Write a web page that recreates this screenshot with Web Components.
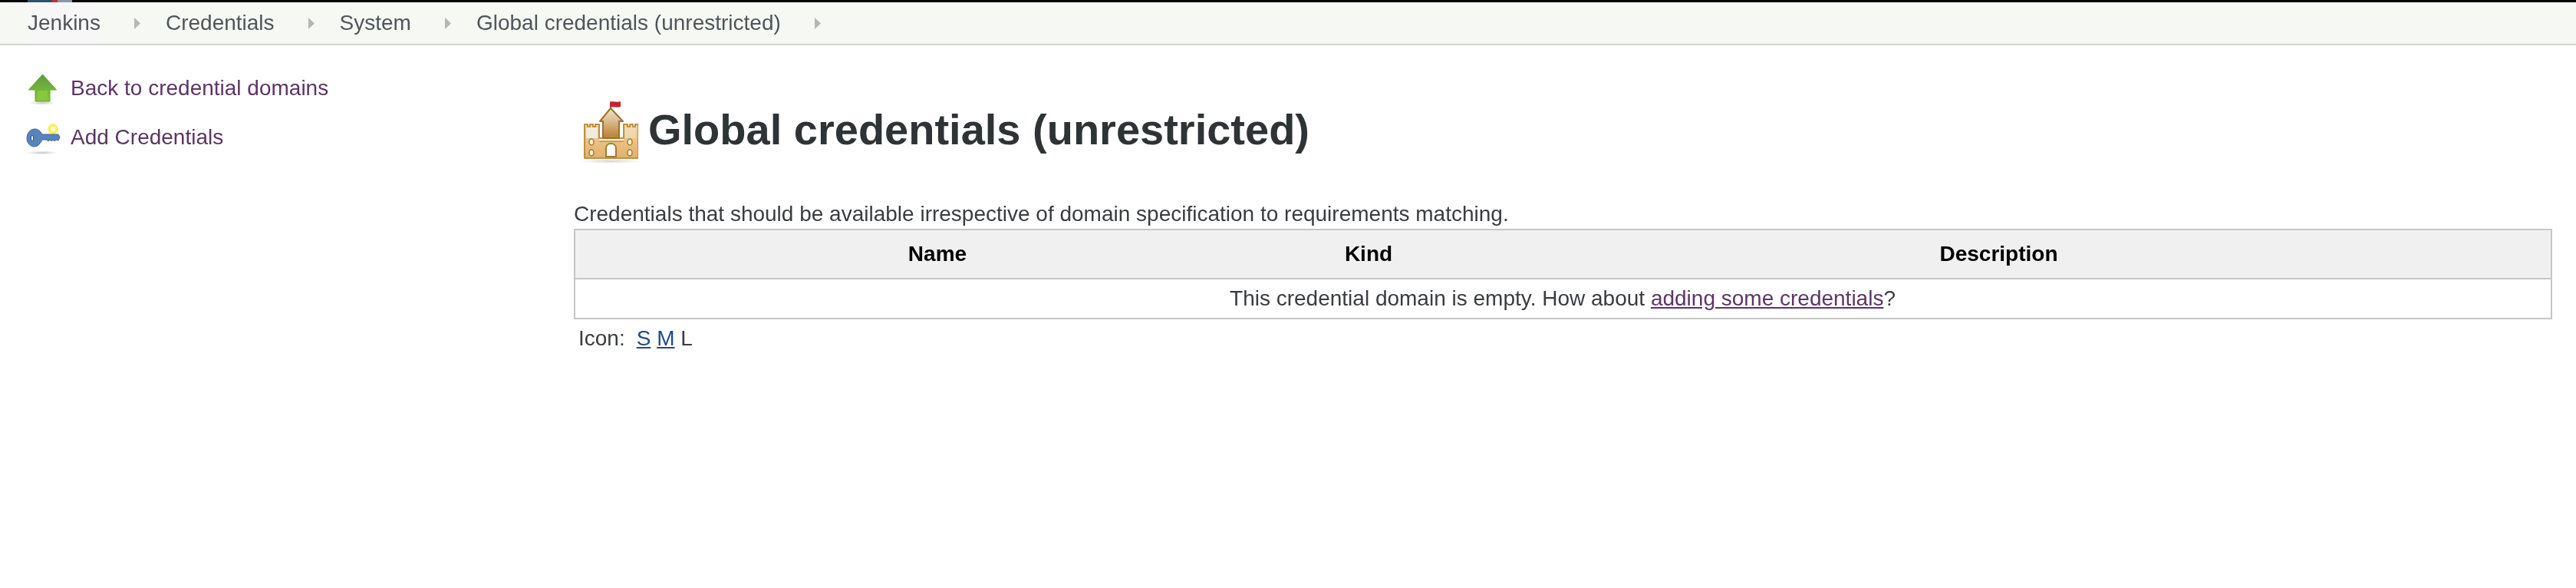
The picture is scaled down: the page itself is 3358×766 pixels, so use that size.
<!DOCTYPE html>
<html><head><meta charset="utf-8"><title>Global credentials</title>
<style>
html,body{margin:0;padding:0;background:#fff;height:766px;overflow:hidden}
body{font-family:"Liberation Sans",Arial,sans-serif;color:#333}
</style></head><body>
<x-top-strip></x-top-strip>
<x-breadcrumbs>
<x-crumb first>Jenkins</x-crumb><x-crumb>Credentials</x-crumb><x-crumb>System</x-crumb><x-crumb>Global credentials (unrestricted)</x-crumb>
</x-breadcrumbs>
<x-layout>
<x-side-panel slot="side">
<x-side-link icon="up">Back to credential domains</x-side-link>
<x-side-link icon="key">Add Credentials</x-side-link>
</x-side-panel>
<x-credentials-view>
<x-page-title>Global credentials (unrestricted)</x-page-title>
<x-cred-table></x-cred-table>
</x-credentials-view>
</x-layout>
<script>
function def(name,html,init){customElements.define(name,class extends HTMLElement{constructor(){super();this.attachShadow({mode:'open'}).innerHTML=typeof html==='function'?html(this):html;}connectedCallback(){init&&init(this)}})}
def('x-top-strip',`<style>:host{display:block;height:3px;background:#050505}
i{display:block;margin-left:36px;width:58px;height:3px;background:linear-gradient(90deg,#33506f 0 55%,#b6383a 55% 68%,#8b95a5 68%)}</style><i></i>`);
def('x-breadcrumbs',`<style>:host{display:flex;align-items:center;height:54px;background:#f6f9f3;border-bottom:2px solid #d3d6d0;filter:blur(.45px)}</style><slot></slot>`);
def('x-crumb',`<style>:host{display:flex;align-items:center;font-size:28px;color:#50555b;height:100%;white-space:nowrap}
.t{padding:0 0 0 36px;height:100%;display:flex;align-items:center}
:host([first]) .t{background:linear-gradient(#f6f7f6,#f6f7f6) 36px 0/92px 100% no-repeat}
svg{margin-left:44px;margin-right:-3px;display:block}</style>
<span class="t"><slot></slot></span><svg width="8" height="15" viewBox="0 0 8 15"><path d="M0 0l8 7.500L0 15z" fill="#b4b7b4"/></svg>`);
def('x-layout',`<style>:host{display:flex;align-items:flex-start;filter:blur(.45px)}</style><slot name="side"></slot><slot></slot>`);
def('x-side-panel',`<style>:host{display:flex;flex-direction:column;gap:24px;width:748px;flex:none;box-sizing:border-box;padding:36px 0 0 33px}</style><slot></slot>`);
const icons={
up:`<svg width="48" height="48" viewBox="0 0 48 48"><defs><linearGradient id="g" x1="0" y1="0" x2="0" y2="1"><stop offset="0" stop-color="#5f9b3c"/><stop offset="1" stop-color="#86c63a"/></linearGradient><radialGradient id="s"><stop offset="0" stop-color="#999" stop-opacity=".55"/><stop offset="1" stop-color="#999" stop-opacity="0"/></radialGradient></defs><ellipse cx="22.500" cy="43" rx="18" ry="3" fill="url(#s)"/><path d="M22.500 6 4.500 26H13v15h19V26h8.500z" fill="url(#g)" stroke="#6b9e3c" stroke-width="1" stroke-linejoin="round"/><path d="M16 27h13v12H16z" fill="#86c93a"/></svg>`,
key:`<svg width="48" height="48" viewBox="0 0 48 48"><defs><radialGradient id="s"><stop offset="0" stop-color="#999" stop-opacity=".55"/><stop offset="1" stop-color="#999" stop-opacity="0"/></radialGradient></defs><ellipse cx="22" cy="44" rx="21" ry="2.500" fill="url(#s)"/><circle cx="36" cy="13" r="5" fill="#fffbd0" stroke="#ffee58" stroke-width="3.500"/><path d="M2 25c0-7 5-12 10-12s8 3 10 7h21l2 4-2 4-3-1-2 2-2-2-2 2-2-2-2 2-2-2H22c-2 4-5 9-10 9S2 32 2 25z" fill="#5684bd" stroke="#3d659c" stroke-width="1"/><ellipse cx="9" cy="25" rx="1.800" ry="3.500" fill="#fff" stroke="#26364d"/></svg>`};
def('x-side-link',t=>`<style>:host{display:flex;align-items:center;height:40px;font-size:28px;color:#5c3566}
.i{width:59px;flex:none;display:block}svg{display:block}</style><span class="i">${icons[t.getAttribute('icon')]}</span><span><slot></slot></span>`);
def('x-credentials-view',`<style>:host{display:block;flex:1;min-width:0;padding:0 31px 0 0}</style><slot></slot>`);
def('x-page-title',`<style>:host{display:flex;align-items:center;margin:65px 0 0 4px;height:100px}
svg{display:block;flex:none;margin-right:13px}
h1{margin:0 0 11px;font-size:56px;font-weight:700;color:#2e3436;white-space:nowrap;line-height:60px}</style>
<svg width="80" height="100" viewBox="2 4 80 100"><defs>
<linearGradient id="t" x1="0" y1="0" x2="0" y2="1"><stop offset="0" stop-color="#f3e6d2"/><stop offset="1" stop-color="#b9802f"/></linearGradient>
<linearGradient id="b" x1="0" y1="0" x2="0" y2="1"><stop offset="0" stop-color="#f2d3a0"/><stop offset="1" stop-color="#e2b069"/></linearGradient>
<radialGradient id="s"><stop offset="0" stop-color="#aaa" stop-opacity=".5"/><stop offset="1" stop-color="#aaa" stop-opacity="0"/></radialGradient></defs>
<ellipse cx="46" cy="90" rx="40" ry="3" fill="url(#s)"/>
<path d="M46 12v10" stroke="#a87a3a" stroke-width="1.500"/><path d="M45 13c4-2 9 1 14-1v7c-5 2-9-1-14 1z" fill="#c4242a"/>
<path d="M12 42h4v3h3v-3h4v3h3v-3h5v18h32V42h5v3h3v-3h4v3h3v-3h4v44H12z" fill="url(#b)" stroke="#c08f45" stroke-width="2" stroke-linejoin="round"/>
<path d="M46 21 32 38h4v22h21V38h5z" fill="url(#t)" stroke="#a0702c" stroke-width="2" stroke-linejoin="round"/>
<path d="M14 46h15v14H14z" fill="#f2ebdf"/><path d="M65 46h14v14H65z" fill="#efdcb6" opacity=".8"/>
<path d="M31 62h32" stroke="#fff" stroke-width="2"/><path d="M31 64h32" stroke="#c08f45" stroke-width="1.500"/>
<path d="M40 84V73c0-8 13-8 13 0v11z" fill="#fff" stroke="#a8772c" stroke-width="2"/>
<g fill="#fff6e4" stroke="#a8772c" stroke-width="1.500"><ellipse cx="21" cy="65" rx="3" ry="4"/><ellipse cx="21" cy="79" rx="3" ry="4"/><ellipse cx="71" cy="65" rx="3" ry="4"/><ellipse cx="71" cy="79" rx="3" ry="4"/></g>
</svg><h1><slot></slot></h1>`);
def('x-cred-table',`<style>:host{display:block;font-size:28px;color:#3a3c40}
.desc{height:34px;line-height:34px;margin:38px 0 2px;white-space:nowrap}
.table{border:2px solid #c6c6c6;box-sizing:border-box;height:118px;display:flex;flex-direction:column}
.head{display:grid;grid-template-columns:944px 180px 1fr;height:62px;flex:none;background:#f0f0f0;border-bottom:2px solid #c6c6c6;align-items:center;text-align:center;font-weight:700;color:#000}
.head div:last-child{padding-left:12px}
.empty{flex:1;display:flex;align-items:center;justify-content:center;padding-right:1px}
a{color:#5c3566;text-decoration:underline}
.size{margin:8px 0 0 6px;line-height:34px}
.size a{color:#204a87}.size span{margin-left:15px}</style>
<div class="desc">Credentials that should be available irrespective of domain specification to requirements matching.</div>
<div class="table"><div class="head"><div>Name</div><div>Kind</div><div>Description</div></div>
<div class="empty"><span>This credential domain is empty. How about <a href="#">adding some credentials</a>?</span></div></div>
<div class="size">Icon:<span><a href="#">S</a> <a href="#">M</a> L</span></div>`);
</script>
</body></html>
